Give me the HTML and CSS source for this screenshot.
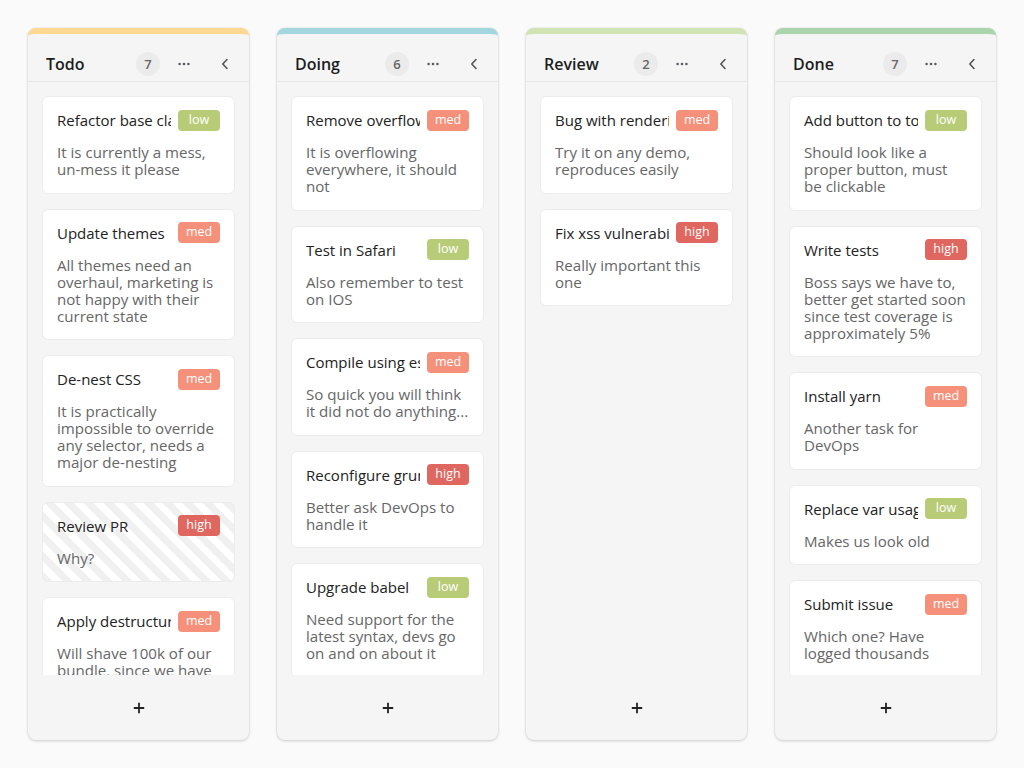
FILE: index.html
```html
<!DOCTYPE html>
<html lang="en">
<head>
    <meta charset="UTF-8">
    <meta name="viewport" content="width=device-width, initial-scale=1.0">
    <title>Kanban board</title>
    <link rel="stylesheet" href="styles.css">
</head>
<body>
    <div class="board">

        <!-- Todo -->
        <section class="column todo">
            <header class="column-head">
                <h2 class="column-title">Todo</h2>
                <span class="count">7</span>
                <button class="icon-btn dots" title="More">
                    <svg width="12" height="4" viewBox="0 0 12 4"><circle cx="1.6" cy="2" r="1.3"/><circle cx="6" cy="2" r="1.3"/><circle cx="10.4" cy="2" r="1.3"/></svg>
                </button>
                <button class="icon-btn" title="Collapse">
                    <svg width="8" height="12" viewBox="0 0 8 12"><path d="M6 1.5 1.8 6 6 10.5"/></svg>
                </button>
            </header>
            <div class="cards">
                <div class="card">
                    <div class="card-head"><h3 class="card-title">Refactor base classes</h3><span class="tag low">low</span></div>
                    <p class="card-text">It is currently a mess, un-mess it please</p>
                </div>
                <div class="card">
                    <div class="card-head"><h3 class="card-title">Update themes</h3><span class="tag med">med</span></div>
                    <p class="card-text">All themes need an overhaul, marketing is not happy with their current state</p>
                </div>
                <div class="card">
                    <div class="card-head"><h3 class="card-title">De-nest CSS</h3><span class="tag med">med</span></div>
                    <p class="card-text">It is practically impossible to override any selector, needs a major de-nesting</p>
                </div>
                <div class="card striped">
                    <div class="card-head"><h3 class="card-title">Review PR</h3><span class="tag high">high</span></div>
                    <p class="card-text">Why?</p>
                </div>
                <div class="card">
                    <div class="card-head"><h3 class="card-title">Apply destructuring</h3><span class="tag med">med</span></div>
                    <p class="card-text">Will shave 100k of our bundle, since we have a lot of repeated code</p>
                </div>
                <div class="card">
                    <div class="card-head"><h3 class="card-title">Clean up icons</h3><span class="tag low">low</span></div>
                    <p class="card-text">Half of them are not used anywhere</p>
                </div>
                <div class="card">
                    <div class="card-head"><h3 class="card-title">Write docs</h3><span class="tag med">med</span></div>
                    <p class="card-text">Nobody knows how the board works</p>
                </div>
            </div>
            <footer class="column-foot">
                <button class="icon-btn add" title="Add card">
                    <svg width="12" height="12" viewBox="0 0 12 12"><path d="M6 .8v10.4M.8 6h10.4"/></svg>
                </button>
            </footer>
        </section>

        <!-- Doing -->
        <section class="column doing">
            <header class="column-head">
                <h2 class="column-title">Doing</h2>
                <span class="count">6</span>
                <button class="icon-btn dots" title="More">
                    <svg width="12" height="4" viewBox="0 0 12 4"><circle cx="1.6" cy="2" r="1.3"/><circle cx="6" cy="2" r="1.3"/><circle cx="10.4" cy="2" r="1.3"/></svg>
                </button>
                <button class="icon-btn" title="Collapse">
                    <svg width="8" height="12" viewBox="0 0 8 12"><path d="M6 1.5 1.8 6 6 10.5"/></svg>
                </button>
            </header>
            <div class="cards">
                <div class="card">
                    <div class="card-head"><h3 class="card-title">Remove overflow</h3><span class="tag med">med</span></div>
                    <p class="card-text">It is overflowing everywhere, it should not</p>
                </div>
                <div class="card">
                    <div class="card-head"><h3 class="card-title">Test in Safari</h3><span class="tag low">low</span></div>
                    <p class="card-text">Also remember to test on IOS</p>
                </div>
                <div class="card">
                    <div class="card-head"><h3 class="card-title">Compile using esbuild</h3><span class="tag med">med</span></div>
                    <p class="card-text">So quick you will think it did not do anything...</p>
                </div>
                <div class="card">
                    <div class="card-head"><h3 class="card-title">Reconfigure grunt</h3><span class="tag high">high</span></div>
                    <p class="card-text">Better ask DevOps to handle it</p>
                </div>
                <div class="card">
                    <div class="card-head"><h3 class="card-title">Upgrade babel</h3><span class="tag low">low</span></div>
                    <p class="card-text">Need support for the latest syntax, devs go on and on about it</p>
                </div>
                <div class="card">
                    <div class="card-head"><h3 class="card-title">Fix the build</h3><span class="tag high">high</span></div>
                    <p class="card-text">It broke again on Friday</p>
                </div>
            </div>
            <footer class="column-foot">
                <button class="icon-btn add" title="Add card">
                    <svg width="12" height="12" viewBox="0 0 12 12"><path d="M6 .8v10.4M.8 6h10.4"/></svg>
                </button>
            </footer>
        </section>

        <!-- Review -->
        <section class="column review">
            <header class="column-head">
                <h2 class="column-title">Review</h2>
                <span class="count">2</span>
                <button class="icon-btn dots" title="More">
                    <svg width="12" height="4" viewBox="0 0 12 4"><circle cx="1.6" cy="2" r="1.3"/><circle cx="6" cy="2" r="1.3"/><circle cx="10.4" cy="2" r="1.3"/></svg>
                </button>
                <button class="icon-btn" title="Collapse">
                    <svg width="8" height="12" viewBox="0 0 8 12"><path d="M6 1.5 1.8 6 6 10.5"/></svg>
                </button>
            </header>
            <div class="cards">
                <div class="card">
                    <div class="card-head"><h3 class="card-title">Bug with rendering</h3><span class="tag med">med</span></div>
                    <p class="card-text">Try it on any demo, reproduces easily</p>
                </div>
                <div class="card">
                    <div class="card-head"><h3 class="card-title">Fix xss vulnerability</h3><span class="tag high">high</span></div>
                    <p class="card-text">Really important this one</p>
                </div>
            </div>
            <footer class="column-foot">
                <button class="icon-btn add" title="Add card">
                    <svg width="12" height="12" viewBox="0 0 12 12"><path d="M6 .8v10.4M.8 6h10.4"/></svg>
                </button>
            </footer>
        </section>

        <!-- Done -->
        <section class="column done">
            <header class="column-head">
                <h2 class="column-title">Done</h2>
                <span class="count">7</span>
                <button class="icon-btn dots" title="More">
                    <svg width="12" height="4" viewBox="0 0 12 4"><circle cx="1.6" cy="2" r="1.3"/><circle cx="6" cy="2" r="1.3"/><circle cx="10.4" cy="2" r="1.3"/></svg>
                </button>
                <button class="icon-btn" title="Collapse">
                    <svg width="8" height="12" viewBox="0 0 8 12"><path d="M6 1.5 1.8 6 6 10.5"/></svg>
                </button>
            </header>
            <div class="cards">
                <div class="card">
                    <div class="card-head"><h3 class="card-title">Add button to toolbar</h3><span class="tag low">low</span></div>
                    <p class="card-text">Should look like a proper button, must be clickable</p>
                </div>
                <div class="card">
                    <div class="card-head"><h3 class="card-title">Write tests</h3><span class="tag high">high</span></div>
                    <p class="card-text">Boss says we have to, better get started soon since test coverage is approximately 5%</p>
                </div>
                <div class="card">
                    <div class="card-head"><h3 class="card-title">Install yarn</h3><span class="tag med">med</span></div>
                    <p class="card-text">Another task for DevOps</p>
                </div>
                <div class="card">
                    <div class="card-head"><h3 class="card-title">Replace var usage</h3><span class="tag low">low</span></div>
                    <p class="card-text">Makes us look old</p>
                </div>
                <div class="card">
                    <div class="card-head"><h3 class="card-title">Submit issue</h3><span class="tag med">med</span></div>
                    <p class="card-text">Which one? Have logged thousands</p>
                </div>
                <div class="card">
                    <div class="card-head"><h3 class="card-title">Drop IE support</h3><span class="tag low">low</span></div>
                    <p class="card-text">Finally</p>
                </div>
                <div class="card">
                    <div class="card-head"><h3 class="card-title">Set up linting</h3><span class="tag med">med</span></div>
                    <p class="card-text">Tabs versus spaces, settled</p>
                </div>
            </div>
            <footer class="column-foot">
                <button class="icon-btn add" title="Add card">
                    <svg width="12" height="12" viewBox="0 0 12 12"><path d="M6 .8v10.4M.8 6h10.4"/></svg>
                </button>
            </footer>
        </section>

    </div>
</body>
</html>
```

FILE: styles.css
```css
body{
    margin: 0;
    background-color: #fafafa;
    font-family: 'Open Sans', 'Noto Sans', sans-serif;
    color: #222;
}
.board{
    display: grid;
    grid-template-columns: repeat(4, 1fr);
    gap: 28px;
    padding: 28px;
}
.column{
    display: flex;
    flex-direction: column;
    height: 706px;
    background-color: #f5f5f5;
    border-top: 6px solid #ffd892;
    border-radius: 8px;
    box-shadow: 0 1px 3px rgba(0, 0, 0, 0.18), 0 0 0 1px rgba(0, 0, 0, 0.02);
    overflow: hidden;
}
.todo{ border-top-color: #ffd892; }
.doing{ border-top-color: #a3d6df; }
.review{ border-top-color: #d0e3b3; }
.done{ border-top-color: #aad4ab; }

.column-head{
    display: flex;
    align-items: center;
    height: 24px;
    padding: 18px 12px 5px 18px;
    border-bottom: 1px solid #e8e8e8;
}
.column-title{
    flex: 1;
    margin: 0;
    font-size: 16px;
    font-weight: 600;
    color: #1d1d1d;
}
.count{
    width: 24px;
    height: 24px;
    border-radius: 50%;
    background-color: #ebebeb;
    color: #666;
    font-size: 13px;
    font-weight: 600;
    line-height: 24px;
    text-align: center;
}
.icon-btn{
    display: flex;
    align-items: center;
    justify-content: center;
    width: 24px;
    height: 24px;
    padding: 0;
    border: none;
    background: none;
    cursor: pointer;
}
.icon-btn svg{
    fill: none;
    stroke: #555;
    stroke-width: 1.6;
    stroke-linecap: round;
    stroke-linejoin: round;
}
.dots{
    margin: 0 17px 0 12px;
}
.dots svg{
    fill: #5a5d66;
    stroke: none;
}

.cards{
    flex: 1;
    overflow: hidden;
    display: flex;
    flex-direction: column;
    gap: 15px;
    padding: 14px 14px 0 14px;
}
.card{
    flex-shrink: 0;
    padding: 12.5px 14px 14.5px 14px;
    background-color: #fff;
    border: 1px solid #ececec;
    border-radius: 6px;
}
.striped{
    background: repeating-linear-gradient(45deg, #f0f0f0 0 7px, #fff 7px 14px);
}
.card-head{
    display: flex;
    align-items: center;
    height: 21px;
    margin-bottom: 13.5px;
}
.card-title{
    flex: 1;
    min-width: 0;
    margin: 0 7px 0 0;
    overflow: hidden;
    white-space: nowrap;
    font-size: 15px;
    font-weight: 500;
    line-height: 20px;
    color: #222;
}
.tag{
    flex-shrink: 0;
    width: 42px;
    height: 21px;
    border-radius: 4px;
    color: #fff;
    font-size: 12.5px;
    font-weight: 500;
    line-height: 20px;
    text-align: center;
}
.low{ background-color: #b8cc78; }
.med{ background-color: #f5917b; }
.high{ background-color: #e0675f; }

.card-text{
    margin: 0;
    font-size: 15.1px;
    line-height: 17px;
    color: #666;
}

.column-foot{
    display: flex;
    justify-content: center;
    align-items: center;
    height: 65px;
    flex-shrink: 0;
}
.add svg{
    stroke: #222;
    stroke-width: 1.8;
    stroke-linecap: butt;
}
```
